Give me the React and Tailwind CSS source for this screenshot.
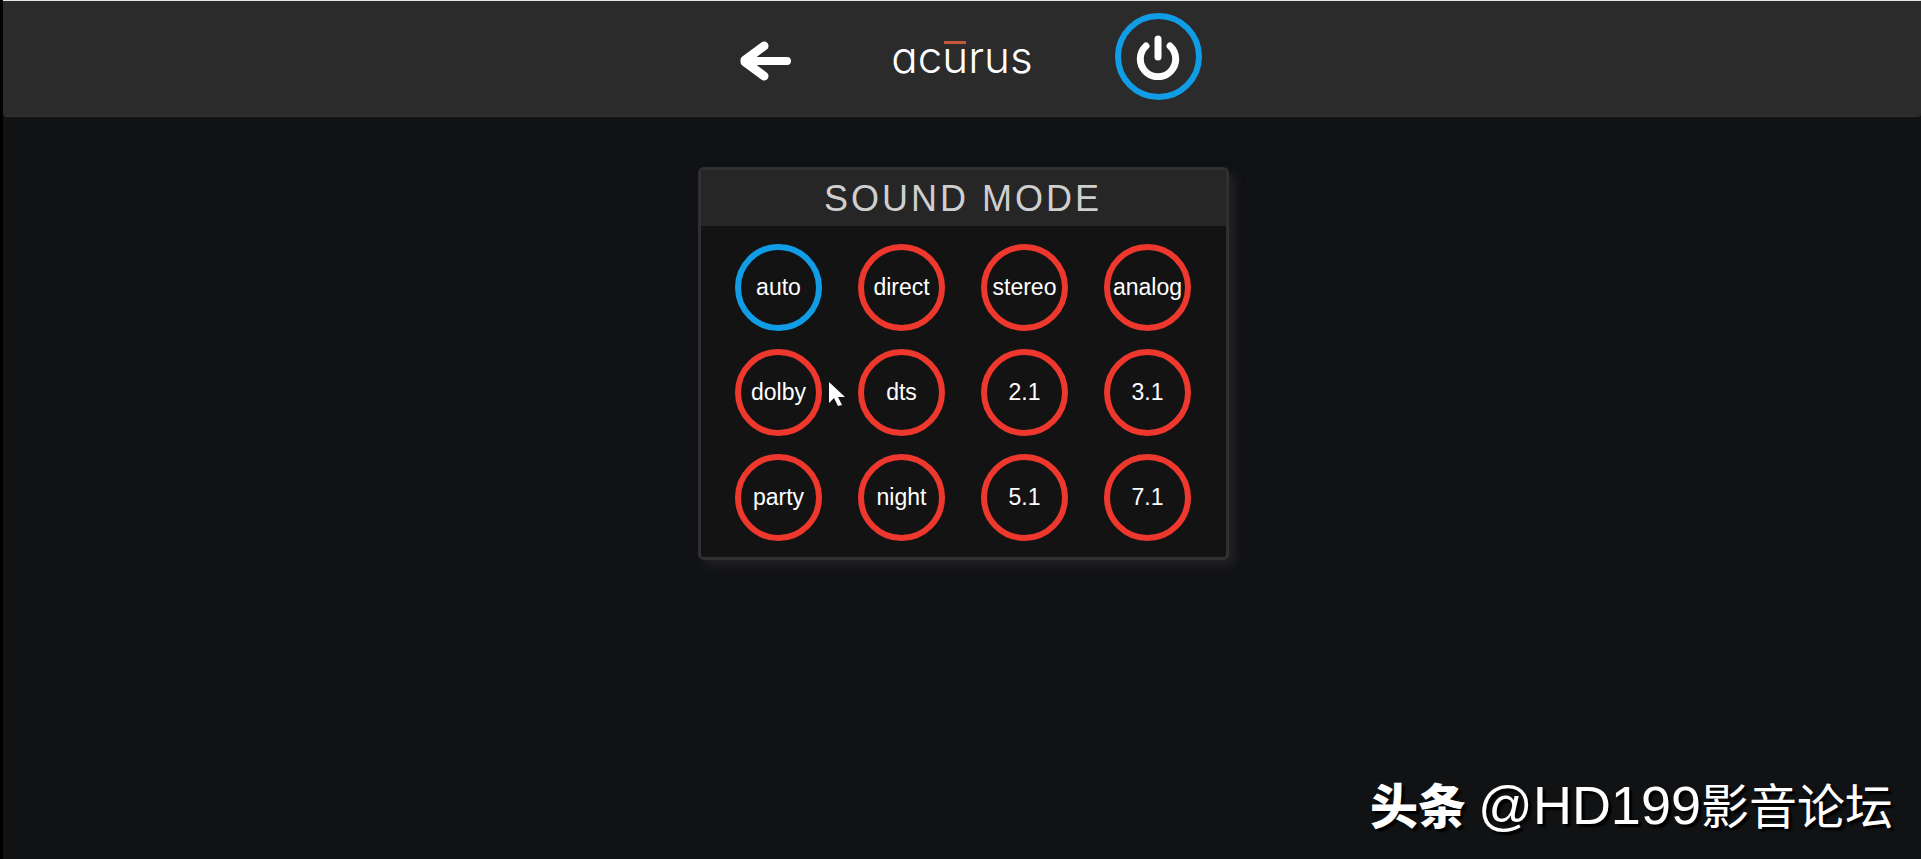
import React from "react";

const MODES = [
  "auto", "direct", "stereo", "analog",
  "dolby", "dts", "2.1", "3.1",
  "party", "night", "5.1", "7.1",
];

function Header() {
  return (
    <header className="h-[117px] border-t border-t-[#dfe8e4] border-b border-b-[#333335] bg-[#2b2b2b] rounded-b flex justify-center">
      <div className="w-[588px] grid grid-cols-3 justify-items-center items-center pb-1">
        <button type="button" aria-label="Back" className="mt-2">
          <svg width="52" height="40" viewBox="0 0 52 40" fill="#fff" stroke="#fff" strokeLinecap="round" strokeLinejoin="round">
            <path d="M47 20H7" strokeWidth="8" />
            <path d="M25 5L5 19V21L25 35L13 20Z" strokeWidth="1" />
            <path d="M24 5L5 19V21L24 35" strokeWidth="9" fill="none" />
          </svg>
        </button>

        <h1 className="font-[Inter,sans-serif] font-light text-[44px] leading-[48px] text-white [font-feature-settings:'cv11']">
          ac
          <span className="relative">
            u
            <span className="absolute left-[2px] right-[2px] top-[11px] h-[3px] bg-[#c4583f]" />
          </span>
          rus
        </h1>

        <button
          type="button"
          aria-label="Power"
          className="size-[87px] rounded-full border-6 border-[#119ce6] flex items-center justify-center"
        >
          <svg width="44" height="46" viewBox="0 0 44 46" fill="none" stroke="#fff" strokeLinecap="round" strokeWidth="7">
            <path d="M22 5V23" />
            <path d="M10 12A17.7 17.7 0 1 0 34 12" />
          </svg>
        </button>
      </div>
    </header>
  );
}

function ModeButton({ label, active }) {
  return (
    <button
      type="button"
      aria-pressed={active}
      className={`size-[87px] rounded-full border-6 text-[23px] text-white flex items-center justify-center ${
        active ? "border-[#119ce6]" : "border-[#ee382e]"
      }`}
    >
      {label}
    </button>
  );
}

export default function App() {
  return (
    <div className="relative min-h-screen bg-[#111214] border-l-3 border-black font-['Liberation_Sans',Arial,sans-serif]">
      <Header />

      <main className="mt-[50px] pl-0.5 flex justify-center">
        <section className="w-[531px] border-3 border-[#303032] rounded-md bg-[#131313] shadow-[6px_6px_10px_#222224]">
          <h2 className="h-14 bg-[#262626] text-[#cfcfcf] text-4xl leading-[58px] tracking-[3px] text-center">
            SOUND MODE
          </h2>
          <div className="grid grid-cols-[repeat(4,87px)] justify-center gap-x-9 gap-y-[18px] pt-[18px] pb-4">
            {MODES.map((mode) => (
              <ModeButton key={mode} label={mode} active={mode === "auto"} />
            ))}
          </div>
        </section>
      </main>

      {/* mouse pointer */}
      <svg className="absolute left-[825px] top-[381px]" width="18" height="26" viewBox="0 0 18 26" fill="#fff">
        <path d="M1 1V22L6 17L10 25L14 24L10 16H17Z" />
      </svg>

      {/* watermark */}
      <p className="absolute right-7 bottom-[22px] flex items-center gap-3 whitespace-nowrap text-white [text-shadow:3px_3px_2px_#000]">
        <span className="font-['Noto_Sans_CJK_SC',sans-serif] font-black text-5xl pb-1">头条</span>
        <span className="font-['Liberation_Sans','Noto_Sans_CJK_SC',sans-serif] text-[54px] leading-[64px]">
          @HD199<span className="text-5xl">影音论坛</span>
        </span>
      </p>
    </div>
  );
}
